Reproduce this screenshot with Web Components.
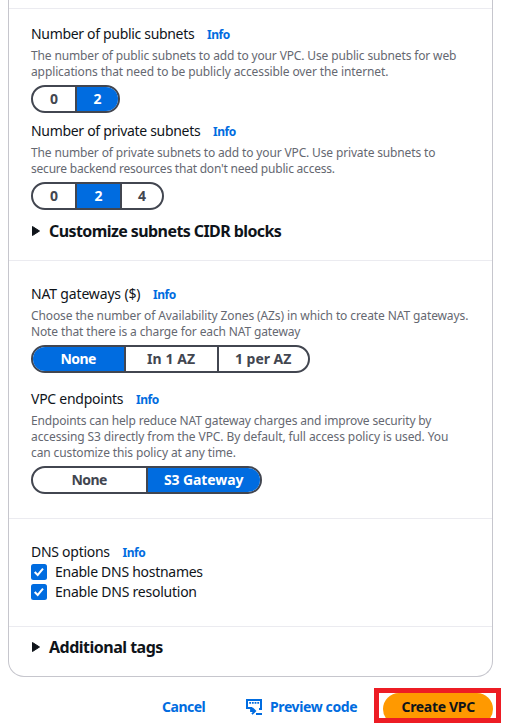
<!DOCTYPE html>
<html lang="en">
<head>
<meta charset="utf-8">
<title>Create VPC</title>
<style>
  html, body { margin: 0; height: 728px; overflow: hidden; background: #fff; }
  body { font-family: "Noto Sans", "Open Sans", sans-serif; color: #0f141a; font-size: 14px; line-height: 20px; }
</style>
</head>
<body>
<vpc-page></vpc-page>
<script>
const define = (name, html, setup) => customElements.define(name, class extends HTMLElement {
  constructor() {
    super();
    this.attachShadow({ mode: 'open' }).innerHTML = html;
  }
  connectedCallback() { if (setup) setup(this, this.shadowRoot); }
});

/* One line of text, tracked so that it spans the given width. */
define('text-line', `<style>
  :host { display: block; white-space: pre; }
  span { display: inline-block; }
</style><span><slot></slot></span>`, (el, root) => {
  const span = root.querySelector('span');
  const target = parseFloat(el.getAttribute('w'));
  const count = el.textContent.length;
  el.style.width = target + 'px';
  const natural = span.getBoundingClientRect().width;
  if (natural) span.style.letterSpacing = ((target - 0.7 - natural) / count).toFixed(3) + 'px';
});

define('info-link', `<style>
  :host { display: block; color: #006ce0; font-size: 12px; font-weight: 700; line-height: 20px; padding-top: 1px; height: 19px; }
</style><text-line w="23.5">Info</text-line>`);

define('form-field', `<style>
  :host { display: block; }
  .label { display: flex; gap: 12px; height: 20px; }
  .desc { padding: 4px 0 5px; font-size: 12px; line-height: 16px; color: #656871; }
</style>
<div class="label"><slot name="label"></slot><info-link></info-link></div>
<div class="desc"><slot name="desc"></slot></div>
<slot></slot>`);

define('segmented-control', `<style>
  :host { display: flex; width: max-content; height: 24px; border: 2px solid #424650; border-radius: 14px; overflow: hidden; background: #fff; }
</style><slot></slot>`);

define('segment-item', `<style>
  :host { display: flex; justify-content: center; align-items: center; box-sizing: border-box; height: 24px; color: #424650; font-weight: 700; }
  :host(:not(:first-child)) { border-left: 2px solid #424650; }
  :host([selected]) { background: #006ce0; color: #fff; }
</style><slot></slot>`, el => { el.style.width = el.getAttribute('width') + 'px'; });

define('expand-header', `<style>
  :host { display: flex; align-items: center; height: 24px; font-size: 16px; font-weight: 700; line-height: 24px; }
  svg { width: 18px; height: 16px; display: block; }
</style><svg viewBox="0 0 18 16"><path d="M1.5 3.5 8.5 8 1.5 12.5Z" fill="#0f141a" stroke="#0f141a" stroke-width="1" stroke-linejoin="round"/></svg><slot></slot>`);

define('check-option', `<style>
  :host { display: flex; align-items: center; gap: 8px; height: 20px; }
  svg { display: block; width: 16px; height: 16px; }
</style><svg viewBox="0 0 16 16"><rect width="16" height="16" rx="2.5" fill="#006ce0"/><path d="M3.7 8 6.7 11 12 4.6" fill="none" stroke="#fff" stroke-width="2"/></svg><slot></slot>`);

define('form-section', `<style>
  :host { display: block; box-sizing: border-box; border-top: 1px solid #ebebf0; padding: 23px 22px 0; }
  :host([first]) { padding-top: 15px; }
  :host([compact]) { padding-top: 8px; }
</style><slot></slot>`, el => { el.style.height = el.getAttribute('height') + 'px'; });

define('preview-icon', `<style>:host, svg { display: block; width: 18px; height: 18px; }</style>
<svg viewBox="0 0 18 18" fill="none" stroke="#006ce0" stroke-width="2">
<path d="M6 9H1V1h14v9h-2"/><path d="M3.2 3.9h10" stroke-width="1.6" stroke-dasharray="1.8 0.9"/>
<path d="M5 8v4h4M6 8.8 9.2 12 6 15.2M10 15h6" stroke-width="1.8"/></svg>`);

define('action-bar', `<style>
  :host { display: flex; height: 40px; padding: 11px 0 0 162px; font-weight: 700; color: #006ce0; line-height: 20px; }
  .cancel { padding-top: 9px; width: 84px; }
  .preview { padding-top: 9px; width: 128px; display: flex; gap: 6px; }
  .preview preview-icon { margin-top: 2px; }
  .highlight { box-sizing: border-box; width: 127px; height: 35px; border: 5px solid #ed1c24; overflow: hidden; background: #fff; }
  .create { margin-left: 4px; width: 110px; height: 32px; border-radius: 16px; background: #ff9900; color: #0f141a; box-sizing: border-box; padding: 4px 0 0 18.5px; }
</style>
<div class="cancel"><text-line w="44">Cancel</text-line></div>
<div class="preview"><preview-icon></preview-icon><text-line w="88">Preview code</text-line></div>
<div class="highlight"><div class="create"><text-line w="74">Create VPC</text-line></div></div>`);

define('vpc-page', `<style>
  :host { display: block; width: 510px; height: 728px; overflow: hidden; }
  .card { box-sizing: border-box; width: 485px; height: 677px; margin-left: 8px; padding-top: 8px; border: 1px solid #c6c6cd; border-top: 0; border-radius: 0 0 16px 16px; }
  .gap8 { margin-top: 8px; }
  .gap9 { margin-top: 9px; }
  .gap16 { margin-top: 16px; }
  .label { display: flex; gap: 12px; }
</style>
<div class="card">
  <form-section first height="252">
    <form-field>
      <text-line slot="label" w="164">Number of public subnets</text-line>
      <text-line slot="desc" w="426">The number of public subnets to add to your VPC. Use public subnets for web</text-line>
      <text-line slot="desc" w="358">applications that need to be publicly accessible over the internet.</text-line>
      <segmented-control>
        <segment-item width="42">0</segment-item><segment-item width="43" selected>2</segment-item>
      </segmented-control>
    </form-field>
    <form-field class="gap8">
      <text-line slot="label" w="170">Number of private subnets</text-line>
      <text-line slot="desc" w="405">The number of private subnets to add to your VPC. Use private subnets to</text-line>
      <text-line slot="desc" w="304.5">secure backend resources that don't need public access.</text-line>
      <segmented-control>
        <segment-item width="42">0</segment-item><segment-item width="45" selected>2</segment-item><segment-item width="42">4</segment-item>
      </segmented-control>
    </form-field>
    <expand-header class="gap9"><text-line w="233">Customize subnets CIDR blocks</text-line></expand-header>
  </form-section>
  <form-section height="258">
    <form-field>
      <text-line slot="label" w="110">NAT gateways ($)</text-line>
      <text-line slot="desc" w="438">Choose the number of Availability Zones (AZs) in which to create NAT gateways.</text-line>
      <text-line slot="desc" w="270">Note that there is a charge for each NAT gateway</text-line>
      <segmented-control>
        <segment-item width="91" selected><text-line w="36">None</text-line></segment-item><segment-item width="93"><text-line w="49">In 1 AZ</text-line></segment-item><segment-item width="91"><text-line w="57">1 per AZ</text-line></segment-item>
      </segmented-control>
    </form-field>
    <form-field class="gap16">
      <text-line slot="label" w="93">VPC endpoints</text-line>
      <text-line slot="desc" w="401">Endpoints can help reduce NAT gateway charges and improve security by</text-line>
      <text-line slot="desc" w="418">accessing S3 directly from the VPC. By default, full access policy is used. You</text-line>
      <text-line slot="desc" w="205.5">can customize this policy at any time.</text-line>
      <segmented-control>
        <segment-item width="113"><text-line w="36">None</text-line></segment-item><segment-item width="114" selected><text-line w="80">S3 Gateway</text-line></segment-item>
      </segmented-control>
    </form-field>
  </form-section>
  <form-section height="108">
    <div class="label"><text-line w="79.5">DNS options</text-line><info-link></info-link></div>
    <check-option><text-line w="148.5">Enable DNS hostnames</text-line></check-option>
    <check-option><text-line w="142.5">Enable DNS resolution</text-line></check-option>
  </form-section>
  <form-section compact height="50">
    <expand-header><text-line w="114.5">Additional tags</text-line></expand-header>
  </form-section>
</div>
<action-bar></action-bar>`);
</script>
</body>
</html>
